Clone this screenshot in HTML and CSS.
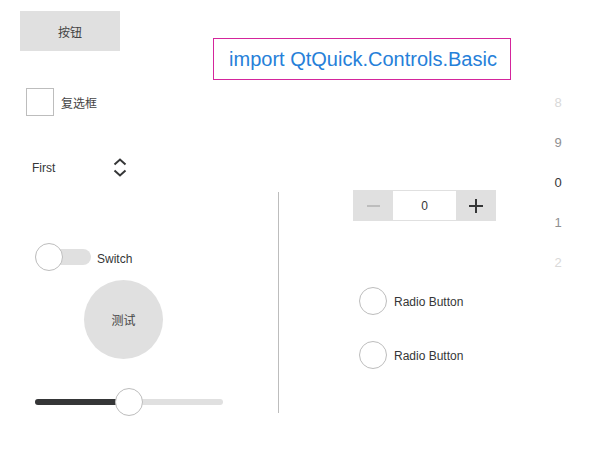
FILE: index.html
```html
<!DOCTYPE html>
<html>
<head>
<meta charset="utf-8">
<link rel="stylesheet" href="styles.css">
</head>
<body>
<div class="page">
  <div class="main">
    <div class="row1">
      <div class="btn">按钮</div>
      <div class="banner">import QtQuick.Controls.Basic</div>
    </div>
    <div class="checkrow">
      <span class="checkbox"></span>
      <span class="label cjk">复选框</span>
    </div>
    <div class="combo">
      <span class="label">First</span>
      <svg class="chev" width="14" height="19" viewBox="0 0 14 19">
        <polyline points="1.5,6.5 7,1.5 12.5,6.5" fill="none" stroke="#353637" stroke-width="2"/>
        <polyline points="1.5,12.5 7,17.5 12.5,12.5" fill="none" stroke="#353637" stroke-width="2"/>
      </svg>
    </div>
    <div class="bottom">
      <div class="left">
        <div class="switch">
          <span class="sw-ind"><span class="sw-track"></span><span class="sw-handle"></span></span>
          <span class="label sw-label">Switch</span>
        </div>
        <div class="round cjk">测试</div>
        <div class="slider">
          <span class="sl-track"><span class="sl-fill" style="width:94px"></span></span>
          <span class="sl-handle" style="left:80px"></span>
        </div>
      </div>
      <div class="sep"></div>
      <div class="right">
        <div class="spin">
          <div class="spin-btn"><span class="minus"></span></div>
          <div class="spin-input">0</div>
          <div class="spin-btn"><span class="plus"></span></div>
        </div>
        <div class="radio r1"><span class="radio-ind"></span><span class="label">Radio Button</span></div>
        <div class="radio r2"><span class="radio-ind"></span><span class="label">Radio Button</span></div>
      </div>
    </div>
  </div>
  <div class="tumbler">
    <div class="t-item t2">8</div>
    <div class="t-item t1">9</div>
    <div class="t-item t0">0</div>
    <div class="t-item t1">1</div>
    <div class="t-item t2">2</div>
  </div>
</div>
</body>
</html>
```
FILE: styles.css
```css
html, body {
  margin: 0;
  padding: 0;
  background: #ffffff;
}
body {
  font-family: "Liberation Sans", "Noto Sans CJK SC", sans-serif;
  font-size: 12px;
  color: #353637;
  width: 613px;
  height: 451px;
  overflow: hidden;
}
.cjk {
  font-family: "Noto Sans CJK SC", sans-serif;
}
.label {
  padding-top: 2px;
}
.cjk.label {
  padding-top: 0;
}
.page {
  display: flex;
}
.main {
  width: 528px;
}
.row1 {
  display: flex;
  align-items: flex-start;
  padding: 11px 0 0 20px;
}
.btn {
  width: 100px;
  height: 40px;
  background: #e0e0e0;
  display: flex;
  align-items: center;
  justify-content: center;
  font-family: "Noto Sans CJK SC", sans-serif;
  font-size: 12px;
  color: #444;
}
.banner {
  margin: 27px 0 0 93px;
  width: 298px;
  height: 42px;
  box-sizing: border-box;
  border: 1px solid #d4259c;
  color: #2680d9;
  font-size: 20px;
  padding-left: 2px;
  display: flex;
  align-items: center;
  justify-content: center;
}
.checkrow {
  display: flex;
  align-items: center;
  margin: 8px 0 0 26px;
  height: 28px;
}
.checkbox {
  width: 28px;
  height: 28px;
  box-sizing: border-box;
  border: 1px solid #bdbdbd;
  background: #fff;
}
.checkrow .label {
  margin-left: 7px;
  color: #444;
}
.combo {
  display: flex;
  align-items: center;
  margin: 31px 0 0 20px;
  width: 107px;
  height: 40px;
  padding-left: 12px;
  box-sizing: border-box;
}
.chev {
  margin-left: auto;
  display: block;
}
.bottom {
  display: flex;
  margin-top: 3px;
}
.left {
  width: 278px;
}
.switch {
  display: flex;
  align-items: center;
  height: 28px;
  margin: 53px 0 0 35px;
}
.sw-ind {
  position: relative;
  width: 56px;
  height: 28px;
  display: block;
}
.sw-track {
  position: absolute;
  left: 0;
  top: 6px;
  width: 56px;
  height: 16px;
  border-radius: 8px;
  background: #e0e0e0;
}
.sw-handle {
  position: absolute;
  left: 0;
  top: 0;
  width: 28px;
  height: 28px;
  box-sizing: border-box;
  border-radius: 50%;
  border: 1px solid #bdbdbd;
  background: #fff;
}
.sw-label {
  margin-left: 6px;
  padding-top: 3px;
}
.round {
  margin: 9px 0 0 84px;
  width: 79px;
  height: 79px;
  border-radius: 50%;
  background: #e0e0e0;
  display: flex;
  align-items: center;
  justify-content: center;
  font-size: 12px;
  color: #444;
}
.slider {
  position: relative;
  margin: 29px 0 0 35px;
  width: 188px;
  height: 28px;
}
.sl-track {
  position: absolute;
  left: 0;
  top: 11px;
  width: 188px;
  height: 6px;
  border-radius: 3px;
  background: #e0e0e0;
  overflow: hidden;
}
.sl-fill {
  display: block;
  height: 6px;
  background: #353637;
}
.sl-handle {
  position: absolute;
  top: 0;
  width: 28px;
  height: 28px;
  box-sizing: border-box;
  border-radius: 50%;
  border: 1px solid #bdbdbd;
  background: #fff;
}
.sep {
  width: 1px;
  height: 221px;
  margin-top: 2px;
  background: #bdbdbd;
}
.right {
  flex: 1;
}
.spin {
  display: flex;
  margin-left: 74px;
  width: 143px;
  height: 31px;
  background: #e0e0e0;
}
.spin-btn {
  width: 40px;
  display: flex;
  align-items: center;
  justify-content: center;
}
.spin-input {
  width: 63px;
  margin: 1px 0;
  padding-top: 1px;
  box-sizing: border-box;
  background: #fff;
  display: flex;
  align-items: center;
  justify-content: center;
}
.minus {
  display: block;
  width: 13px;
  height: 2px;
  background: #bdbdbd;
}
.plus {
  display: block;
  width: 14px;
  height: 14px;
  background:
    linear-gradient(#353637, #353637) center / 14px 2px no-repeat,
    linear-gradient(#353637, #353637) center / 2px 14px no-repeat;
}
.radio {
  display: flex;
  align-items: center;
  height: 28px;
  margin-left: 80px;
}
.r1 {
  margin-top: 66px;
}
.r2 {
  margin-top: 26px;
}
.radio-ind {
  width: 28px;
  height: 28px;
  box-sizing: border-box;
  border-radius: 50%;
  border: 1px solid #bdbdbd;
  background: #fff;
}
.radio .label {
  margin-left: 7px;
}
.tumbler {
  width: 60px;
  margin-top: 82px;
}
.t-item {
  height: 40px;
  display: flex;
  align-items: center;
  justify-content: center;
  font-size: 13px;
  padding-top: 0;
  box-sizing: border-box;
}
.t0 { color: #353637; }
.t1 { color: #8f9091; }
.t2 { color: #d9d9d9; }
```
